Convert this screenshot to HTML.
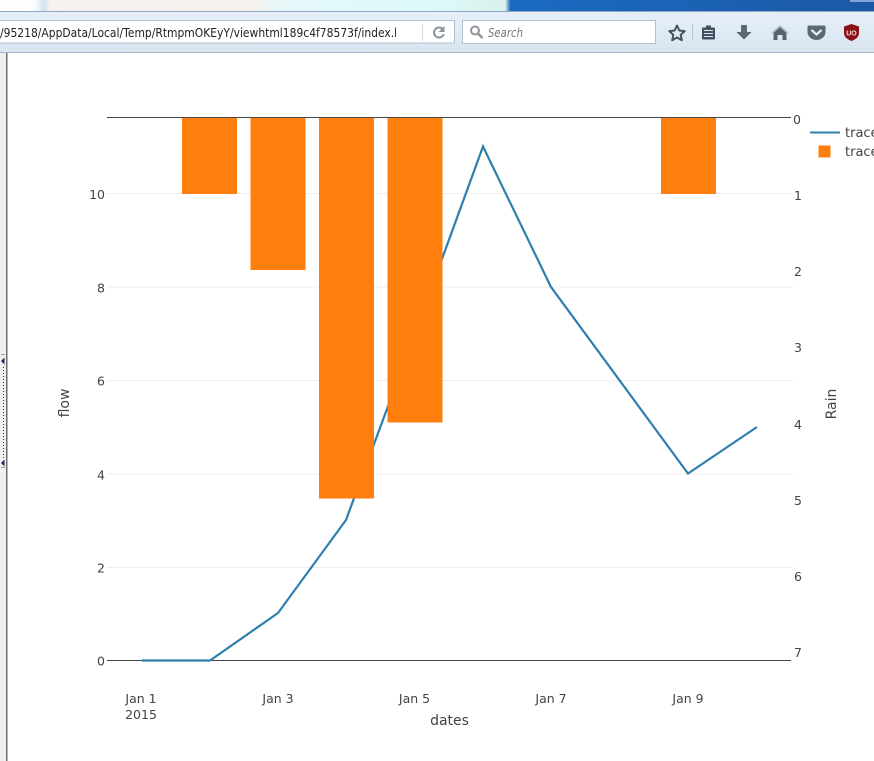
<!DOCTYPE html>
<html>
<head>
<meta charset="utf-8">
<style>
html,body{margin:0;padding:0;background:#fff;width:874px;height:761px;overflow:hidden}
svg{display:block}
text{font-family:"DejaVu Sans","Liberation Sans",sans-serif;fill:#444}
.t{font-size:12.5px}
.ui{font-family:"Liberation Sans",sans-serif;fill:#222}
</style>
</head>
<body>
<svg width="874" height="761" viewBox="0 0 874 761" xmlns="http://www.w3.org/2000/svg">
<defs>
<linearGradient id="top" x1="0" x2="1" y1="0" y2="0">
<stop offset="0" stop-color="#ffffff"/>
<stop offset="0.04" stop-color="#fbfdfd"/>
<stop offset="0.05" stop-color="#cfe6f0"/>
<stop offset="0.058" stop-color="#f7f1ef"/>
<stop offset="0.29" stop-color="#f5f1ec"/>
<stop offset="0.32" stop-color="#e6f7fa"/>
<stop offset="0.5" stop-color="#dcf9fa"/>
<stop offset="0.578" stop-color="#d9f1ea"/>
<stop offset="0.584" stop-color="#1a6ac2"/>
<stop offset="0.8" stop-color="#1b62b4"/>
<stop offset="1" stop-color="#1b58a4"/>
</linearGradient>
<linearGradient id="bar" x1="0" x2="0" y1="0" y2="1">
<stop offset="0" stop-color="#e6eff9"/>
<stop offset="1" stop-color="#d9e5f2"/>
</linearGradient>
</defs>

<rect x="0" y="0" width="874" height="12" fill="url(#top)"/>
<rect x="850" y="0" width="24" height="2" fill="#7fa6d6"/>
<rect x="0" y="11" width="874" height="1" fill="#8fa6bf"/>
<rect x="0" y="12" width="874" height="40" fill="url(#bar)"/>
<rect x="0" y="52" width="874" height="1" fill="#a9b4c2"/>

<rect x="-2" y="20.500" width="456.500" height="22.500" fill="#fff" stroke="#b4c0cf"/>
<line x1="422.500" y1="24" x2="422.500" y2="41" stroke="#d5dbe2"/>
<text class="ui" x="0" y="37" font-size="12.300" style="font-family:'DejaVu Sans',sans-serif;fill:#222" textLength="401" lengthAdjust="spacingAndGlyphs">/95218/AppData/Local/Temp/RtmpmOKEyY/viewhtml189c4f78573f/index.h</text>
<rect x="396" y="24" width="26" height="16" fill="#fff"/>
<path d="M443 29.500a5 5 0 1 0 .8 4.500" fill="none" stroke="#8a949e" stroke-width="2"/>
<path d="M444.500 26v6h-6z" fill="#8a949e"/>

<rect x="462.500" y="20.500" width="193" height="23" fill="#fff" stroke="#b4c0cf"/>
<circle cx="475" cy="30.500" r="4" fill="none" stroke="#8e959c" stroke-width="2"/>
<line x1="478" y1="33.500" x2="482.500" y2="38" stroke="#8e959c" stroke-width="2.500"/>
<text x="488" y="37" font-size="12" font-style="italic" style="font-family:'DejaVu Sans',sans-serif;fill:#777" textLength="35" lengthAdjust="spacingAndGlyphs">Search</text>

<path d="M677 25.500l2.300 5 5.400.6-4 3.700 1.100 5.400-4.800-2.700-4.800 2.700 1.100-5.400-4-3.700 5.400-.6z" fill="none" stroke="#44525f" stroke-width="2" stroke-linejoin="round"/>
<line x1="692.500" y1="24" x2="692.500" y2="40" stroke="#b9c5d2"/>
<path d="M703 27.500h3v-2h5v2h3a1 1 0 0 1 1 1v10a1 1 0 0 1-1 1h-11a1 1 0 0 1-1-1v-10a1 1 0 0 1 1-1z" fill="#44525f"/>
<path d="M704 30.500h9M704 33.500h9M704 36.500h9" stroke="#dfe8f2" stroke-width="1"/>
<path d="M741 25h6v7h4.500l-7.500 7.500-7.500-7.500h4.500z" fill="#5c6873"/>
<path d="M780 25.500l8.500 7.500h-2v7h-4v-5h-5v5h-4v-7h-2z" fill="#56636e"/>
<path d="M772.500 33l7.500-6.500 7.500 6.500" fill="none" stroke="#e6eef7" stroke-width=".8"/>
<path d="M809 25.500h15a1.500 1.500 0 0 1 1.500 1.500v5a9 8 0 0 1-18 0v-5a1.500 1.500 0 0 1 1.500-1.500z" fill="#5c6873"/>
<path d="M811.500 30l5 4.500 5-4.500" fill="none" stroke="#e6eef7" stroke-width="2.200"/>
<path d="M851.500 24l7.500 2.500v6.500c0 4-3.500 6.500-7.500 8-4-1.500-7.500-4-7.500-8v-6.500z" fill="#8a1116"/>
<text x="851.500" y="35.500" font-size="7" text-anchor="middle" font-weight="bold" style="font-family:'Liberation Sans',sans-serif;fill:#f3dcdc">UO</text>

<rect x="0" y="53" width="6" height="708" fill="#f0f0f0"/>
<rect x="6" y="53" width="1.500" height="708" fill="#6e6e6e"/>
<rect x="1" y="354" width="4" height="1" fill="#9a9a9a"/>
<rect x="1" y="467" width="4" height="1" fill="#9a9a9a"/>
<line x1="3.500" x2="3.500" y1="367" y2="459" stroke="#333" stroke-width="1" stroke-dasharray="1 2"/>
<path d="M1 361l3.500-3.500v7zM1 463l3.500-3.500v7z" fill="#1a2a55"/>

<g stroke="#eeeeee" stroke-width="1">
<line x1="107" x2="793" y1="193.500" y2="193.500"/>
<line x1="107" x2="793" y1="287" y2="287"/>
<line x1="107" x2="793" y1="380.500" y2="380.500"/>
<line x1="107" x2="793" y1="474" y2="474"/>
<line x1="107" x2="793" y1="567.500" y2="567.500"/>
</g>
<line x1="107" x2="791" y1="117.500" y2="117.500" stroke="#444"/>
<line x1="107" x2="791" y1="660.500" y2="660.500" stroke="#444"/>

<polyline points="142,660.500 210,660.500 278,613 346,520 415,333 483,146.500 551,287 688,473.500 757,427" fill="none" stroke="#2f7fad" stroke-width="2.200"/>

<g fill="#ff7f0e">
<rect x="182" y="118" width="55" height="76"/>
<rect x="250.500" y="118" width="55" height="152"/>
<rect x="319" y="118" width="55" height="380.500"/>
<rect x="387.500" y="118" width="55" height="304.500"/>
<rect x="661" y="118" width="55" height="76"/>
</g>

<g class="t" text-anchor="end">
<text x="105" y="665.500">0</text>
<text x="105" y="572.500">2</text>
<text x="105" y="479.500">4</text>
<text x="105" y="385.500">6</text>
<text x="105" y="292.500">8</text>
<text x="105" y="199">10</text>
</g>
<g class="t">
<text x="793" y="124">0</text>
<text x="794" y="200">1</text>
<text x="794" y="276">2</text>
<text x="794" y="352">3</text>
<text x="794" y="429">4</text>
<text x="794" y="505">5</text>
<text x="794" y="581">6</text>
<text x="794" y="657">7</text>
</g>
<g class="t" text-anchor="middle">
<text x="141" y="703">Jan 1</text>
<text x="141" y="719">2015</text>
<text x="278" y="703">Jan 3</text>
<text x="414.500" y="703">Jan 5</text>
<text x="551" y="703">Jan 7</text>
<text x="688" y="703">Jan 9</text>
</g>
<text x="449.500" y="725" font-size="14" text-anchor="middle">dates</text>
<text transform="translate(69,403) rotate(-90)" font-size="14" text-anchor="middle">flow</text>
<text transform="translate(836,404) rotate(-90)" font-size="14" text-anchor="middle">Rain</text>

<line x1="810" x2="840" y1="132.500" y2="132.500" stroke="#2f7fad" stroke-width="2"/>
<rect x="818.500" y="145.500" width="12" height="12" fill="#ff7f0e"/>
<text x="845" y="137" font-size="13">trace 0</text>
<text x="845" y="156" font-size="13">trace 1</text>
</svg>
</body>
</html>
